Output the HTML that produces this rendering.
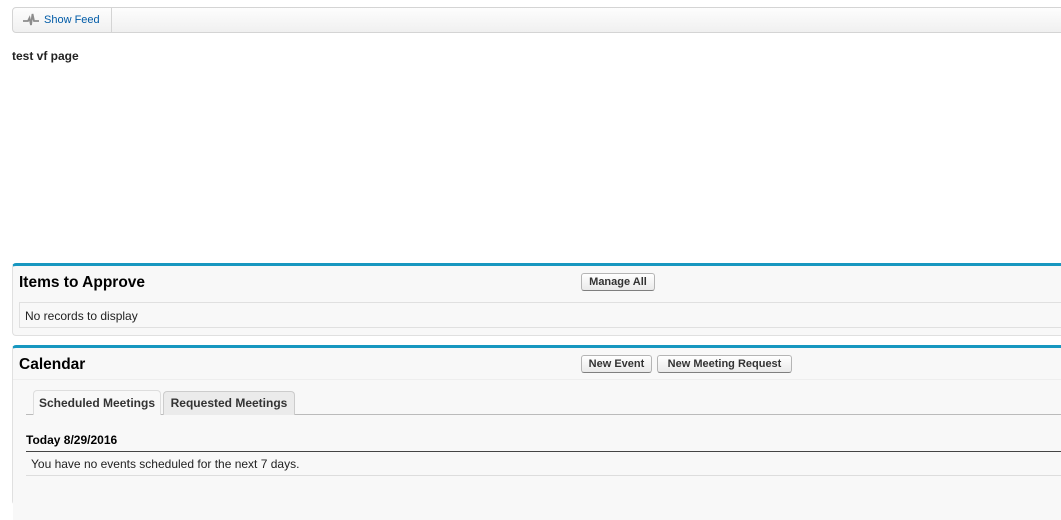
<!DOCTYPE html>
<html><head><style>
body{margin:0;background:#fff;font-family:"Liberation Sans",Arial,sans-serif;font-size:12px;color:#222;width:1061px;height:497px;overflow:hidden;position:relative}
.abs{position:absolute}
.bar{left:12px;top:7px;width:1060px;height:26px;border:1px solid #d4d4d4;border-radius:4px;background:linear-gradient(#fdfdfd,#f0f0f0);box-sizing:border-box}
.sf{left:12px;top:7px;width:100px;height:26px;border-right:1px solid #d4d4d4;box-sizing:border-box}
.btn{position:absolute;height:18px;border:1px solid #b5b5b5;border-bottom-color:#7f7f7f;border-radius:3px;background:linear-gradient(#fff,#eaeaea);font-size:11px;font-weight:bold;color:#333;line-height:16px;text-align:center;box-sizing:border-box}
.panel{left:12px;width:1060px;border-top:3px solid #1797c0;background:#f8f8f8;border-left:1px solid #e0e0e0;border-bottom:1px solid #e0e0e0;border-radius:4px 0 0 4px;box-sizing:border-box}
h2{margin:0;position:absolute;font-size:15.5px;font-weight:bold;color:#000}
</style></head><body>
<div class="abs bar"></div>
<div class="abs sf">
<svg class="abs" style="left:11px;top:6px" width="16" height="14" viewBox="0 0 16 14"><path d="M0 8H5L6.5 5 8 12 9.5 1 11 8H16" fill="none" stroke="#8c8c8c" stroke-width="1.8"/></svg>
<span class="abs" style="left:32px;top:7px;color:#015ba7;font-size:11px">Show Feed</span></div>
<div class="abs" style="left:12px;top:49px;font-weight:bold">test vf page</div>

<div class="abs panel" style="top:263px;height:73px">
<h2 style="left:6px;top:8px">Items to Approve</h2>
<div class="btn" style="left:568px;top:7px;width:74px">Manage All</div>
<div class="abs" style="left:6px;top:36px;width:1050px;height:26px;border:1px solid #e0e0e0;background:#f8f8f8;box-sizing:border-box"><span class="abs" style="left:5px;top:6px">No records to display</span></div>
</div>

<div class="abs panel" style="top:345px;height:160px">
<h2 style="left:6px;top:8px">Calendar</h2>
<div class="btn" style="left:568px;top:7px;width:71px">New Event</div>
<div class="btn" style="left:644px;top:7px;width:135px">New Meeting Request</div>
<div class="abs" style="left:0;top:31px;width:1060px;height:140px;background:#f8f8f8;border-top:1px solid #eee"></div>
<div class="abs" style="left:13px;top:66px;width:1050px;border-top:1px solid #bbb"></div>
<div class="abs" style="left:20px;top:42px;width:128px;height:25px;background:#f8f8f8;border:1px solid #ddd;border-bottom:none;border-radius:4px 4px 0 0;box-sizing:border-box;font-weight:bold;color:#333;text-align:center;line-height:24px">Scheduled Meetings</div>
<div class="abs" style="left:150px;top:43px;width:132px;height:24px;background:#ebebeb;border:1px solid #ccc;border-bottom:none;border-radius:4px 4px 0 0;box-sizing:border-box;font-weight:bold;color:#333;text-align:center;line-height:23px">Requested Meetings</div>
<div class="abs" style="left:13px;top:85px;font-weight:bold;color:#000">Today 8/29/2016</div>
<div class="abs" style="left:13px;top:103px;width:1050px;border-top:1px solid #444"></div>
<div class="abs" style="left:18px;top:109px">You have no events scheduled for the next 7 days.</div>
<div class="abs" style="left:13px;top:127px;width:1050px;border-top:1px solid #ddd"></div>
</div>
</body></html>
